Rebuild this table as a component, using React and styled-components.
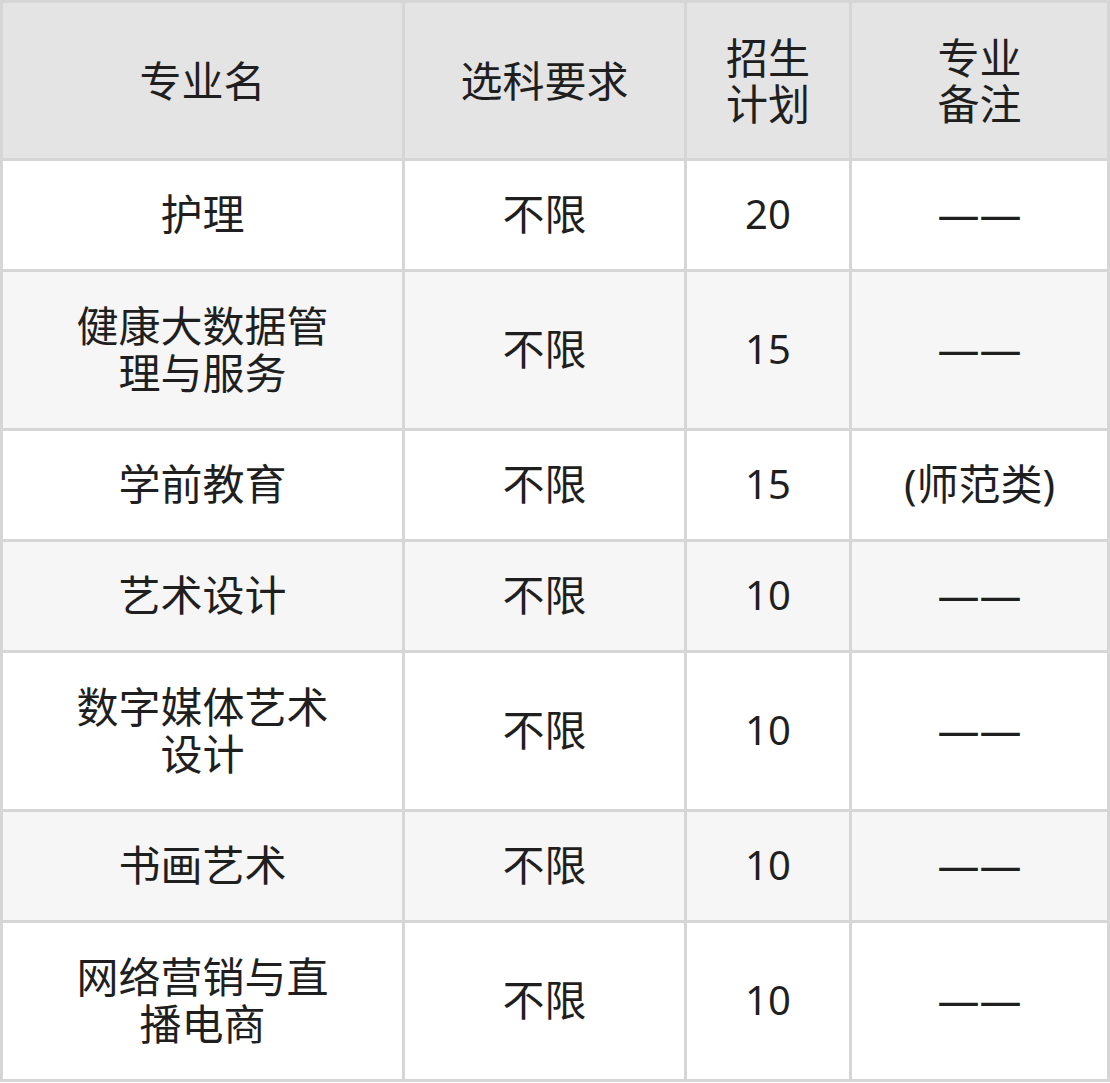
import React from 'react'
import styled, { createGlobalStyle } from 'styled-components'

const rows = [
  { name: '护理', req: '不限', plan: '20', note: '——' },
  { name: '健康大数据管理与服务', req: '不限', plan: '15', note: '——', wrap: true },
  { name: '学前教育', req: '不限', plan: '15', note: '(师范类)' },
  { name: '艺术设计', req: '不限', plan: '10', note: '——' },
  { name: '数字媒体艺术设计', req: '不限', plan: '10', note: '——', wrap: true },
  { name: '书画艺术', req: '不限', plan: '10', note: '——' },
  { name: '网络营销与直播电商', req: '不限', plan: '10', note: '——', wrap: true },
]

const App = () => {
  return (
    <>
      <GlobalStyle />
      <Table>
        <colgroup>
          <col style={{ width: 402 }} />
          <col style={{ width: 282 }} />
          <col style={{ width: 165 }} />
          <col />
        </colgroup>
        <thead>
          <tr>
            <Th>专业名</Th>
            <Th>选科要求</Th>
            <Th>招生<br />计划</Th>
            <Th>专业<br />备注</Th>
          </tr>
        </thead>
        <tbody>
          {rows.map((r, i) => (
            <Row key={i} $odd={i % 2 === 1}>
              <Td>
                <NameText $wrap={r.wrap}>{r.name}</NameText>
              </Td>
              <Td>{r.req}</Td>
              <Td $num>{r.plan}</Td>
              <Td>{r.note}</Td>
            </Row>
          ))}
        </tbody>
      </Table>
    </>
  )
}

export default App

const GlobalStyle = createGlobalStyle`
  body {
    margin: 0;
    background: #ffffff;
    font-family: "Noto Sans", "Noto Sans CJK SC", sans-serif;
  }
`;

const Table = styled.table`
  width: 1110px;
  table-layout: fixed;
  border-collapse: collapse;
  border: 3px solid #d6d6d6;
  color: #1f1f1f;
  font-size: 42px;
  line-height: 46px;
`;

const Th = styled.th`
  height: 155px;
  padding: 0 4px;
  background: #e4e4e4;
  border: 3px solid #d6d6d6;
  font-weight: 400;
  text-align: center;
  vertical-align: middle;
`;

const Row = styled.tr`
  background: ${props => (props.$odd ? '#f6f6f6' : '#ffffff')};
`;

const Td = styled.td`
  padding: 30px 4px 32px;
  border: 3px solid #d6d6d6;
  font-size: ${props => (props.$num ? '40px' : '42px')};
  text-align: center;
  vertical-align: middle;
`;

const NameText = styled.div`
  width: 256px;
  margin: 0 auto;
  line-height: ${props => (props.$wrap ? '47px' : '46px')};
  word-break: break-all;
`;
